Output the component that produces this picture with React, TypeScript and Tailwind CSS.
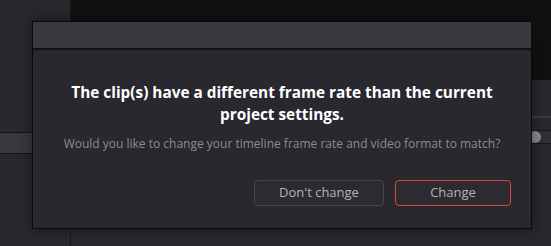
import * as React from "react";

export default function App(): React.JSX.Element {
  return (
    <div className="relative h-[246px] w-[551px] overflow-hidden bg-[#28282d] font-['Open_Sans',sans-serif]">
      {/* Background app panels */}
      <div className="flex h-full">
        <div className="flex w-[71px] flex-col border-r border-[#18181b] bg-[#28282d]">
          <div className="h-[132px]" />
          <div className="h-[22px] border-y border-[#141416] bg-[#38393e]" />
          <div className="flex-1" />
        </div>
        <div className="flex flex-1 flex-col">
          <div className="h-[80px] bg-[#111112]" />
          <div className="h-[38px] border-b-2 border-[#3a3b40] bg-[#28282d]" />
          <div className="mt-[12px] flex h-[14px] items-center border-y border-[#18181a] bg-[#303136]">
            <div className="ml-auto mr-[10px] h-[12px] w-[12px] rounded-full bg-[#8a8a8e]" />
          </div>
          <div className="flex-1" />
        </div>
      </div>

      {/* Dialog */}
      <div className="absolute left-[32px] top-[21px] flex h-[208px] w-[500px] flex-col border border-[#0a0a0b] bg-[#28282e] shadow-[0_0_14px_rgba(0,0,0,0.45)]">
        <div className="h-[28px] border-b-2 border-[#111113] bg-[#393a3f]" />
        <div className="flex flex-1 flex-col items-center">
          <h1 className="mt-[31px] text-center text-[15.35px] font-bold leading-[22px] text-white">
            The clip(s) have a different frame rate than the current
            <br />
            project settings.
          </h1>
          <p className="mt-[10px] text-center text-[12px] text-[#8c8c8f]">
            Would you like to change your timeline frame rate and video format to match?
          </p>
          <div className="mt-[27px] flex w-full justify-end gap-[11px] pr-[20px]">
            <button
              type="button"
              className="h-[26px] w-[130px] rounded-[4px] border border-[#46464c] bg-[#2b2b31] text-[13px] text-[#b4b4b6]"
            >
              Don&apos;t change
            </button>
            <button
              type="button"
              className="h-[26px] w-[116px] rounded-[4px] border border-[#d9463b] bg-[#2b2b31] text-[13px] text-[#b4b4b6]"
            >
              Change
            </button>
          </div>
        </div>
      </div>
    </div>
  );
}
